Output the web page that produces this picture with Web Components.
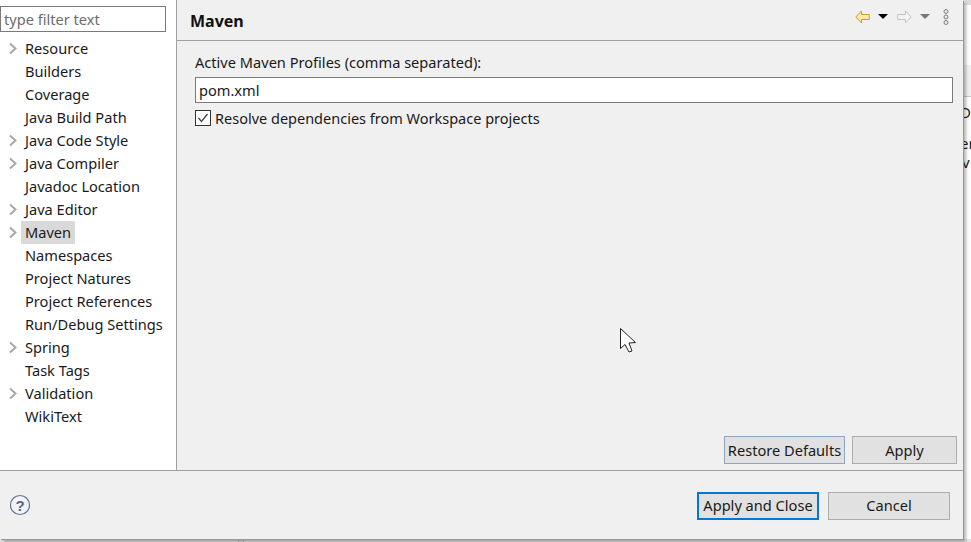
<!DOCTYPE html>
<html>
<head>
<meta charset="utf-8">
<title>Maven</title>
<style>
    html, body { margin: 0; height: 100%; overflow: hidden; }
    body { font: 14.6px "Noto Sans", sans-serif; color: #1a1a1a; background: #f0f0f0; }
</style>
</head>
<body>
<prefs-dialog>
    <filter-tree slot="side">
        <tree-item arrow>Resource</tree-item>
        <tree-item>Builders</tree-item>
        <tree-item>Coverage</tree-item>
        <tree-item>Java Build Path</tree-item>
        <tree-item arrow>Java Code Style</tree-item>
        <tree-item arrow>Java Compiler</tree-item>
        <tree-item>Javadoc Location</tree-item>
        <tree-item arrow>Java Editor</tree-item>
        <tree-item arrow selected>Maven</tree-item>
        <tree-item>Namespaces</tree-item>
        <tree-item>Project Natures</tree-item>
        <tree-item>Project References</tree-item>
        <tree-item>Run/Debug Settings</tree-item>
        <tree-item arrow>Spring</tree-item>
        <tree-item>Task Tags</tree-item>
        <tree-item arrow>Validation</tree-item>
        <tree-item>WikiText</tree-item>
    </filter-tree>
    <maven-page slot="main"></maven-page>
</prefs-dialog>
<mouse-cursor></mouse-cursor>

<script>
    class TreeItem extends HTMLElement {
    constructor() {
        super();
        this.attachShadow({ mode: 'open' });
        const arrow = this.hasAttribute('arrow') ? `<svg width="10" height="13" viewBox="0 0 10 13"><path d="M2 1.5 L7.5 6.5 L2 11.5" fill="none" stroke="#a8a8a8" stroke-width="2"/></svg>` : '';
        this.shadowRoot.innerHTML = `
        <style>
            :host { display: flex; height: 23px; align-items: center; white-space: nowrap; }
            .arrow { width: 21px; padding-left: 8px; box-sizing: border-box; display: flex; }
            .label { padding: 0 4px; height: 23px; line-height: 22px; }
            :host([selected]) .label { background: #d9d9d9; }
        </style>
        <span class="arrow">${arrow}</span><span class="label"><slot></slot></span>
        `;
    }
    }
    customElements.define('tree-item', TreeItem);

    class FilterTree extends HTMLElement {
    constructor() {
        super();
        this.attachShadow({ mode: 'open' });
        this.shadowRoot.innerHTML = `
        <style>
            :host { display: flex; flex-direction: column; height: 100%; background: #fff; }
            .filter {
                margin: 6px 0 0 0;
                width: 166px;
                height: 26px;
                box-sizing: border-box;
                border: 1px solid #7a7a7a;
                color: #6d6d6d;
                padding-left: 3px;
                line-height: 24px;
            }
            .tree { padding-top: 5px; }
        </style>
        <div class="filter">type filter text</div>
        <div class="tree"><slot></slot></div>
        `;
    }
    }
    customElements.define('filter-tree', FilterTree);

    class PushButton extends HTMLElement {
    constructor() {
        super();
        this.attachShadow({ mode: 'open' });
        this.shadowRoot.innerHTML = `
        <style>
            :host {
                display: flex;
                align-items: center;
                justify-content: center;
                box-sizing: border-box;
                height: 28px;
                background: #e1e1e1;
                border: 1px solid #adadad;
                white-space: nowrap;
            }
            :host([hover]) { border-color: #8ea5bd; }
            :host([default]) { border: 2px solid #0078d7; }
        </style>
        <slot></slot>
        `;
    }
    }
    customElements.define('push-button', PushButton);

    class MavenPage extends HTMLElement {
    constructor() {
        super();
        this.attachShadow({ mode: 'open' });
        this.shadowRoot.innerHTML = `
        <style>
            :host { display: flex; flex-direction: column; height: 100%; }
            .head {
                height: 40px;
                flex: none;
                display: flex;
                align-items: center;
                justify-content: space-between;
                border-bottom: 1px solid #a0a0a0;
                padding: 0 14px 0 13px;
            }
            h1 { font-size: 16px; font-weight: 700; margin: 1px 0 0; color: #111; }
            .tools { display: flex; align-items: center; gap: 8px; margin-top: -7px; }
            .body { flex: 1; padding: 11px 10px 0 18px; display: flex; flex-direction: column; }
            .field {
                height: 26px;
                margin-top: 5px;
                box-sizing: border-box;
                background: #fff;
                border: 1px solid #7a7a7a;
                padding-left: 3px;
                line-height: 24px;
            }
            .check { display: flex; align-items: center; gap: 4px; margin-top: 5px; height: 20px; }
            .check span:last-child { font-size: 14.5px; }
            .box { width: 16px; height: 16px; box-sizing: border-box; border: 1px solid #333; display: flex; background: #fff; }
            .actions { margin: auto -4px 0 0; display: flex; justify-content: flex-end; gap: 7px; padding-bottom: 6px; }
            .restore { width: 121px; }
            .apply { width: 105px; }
        </style>
        <div class="head">
            <h1>Maven</h1>
            <div class="tools">
                <svg width="15" height="14" viewBox="0 0 15 14"><path d="M0.8 7 L6.5 1 V4.5 H14.3 V9.5 H6.5 V13 Z" fill="#fde9a8" stroke="#d09a2c"/></svg>
                <svg width="10" height="5" viewBox="0 0 10 5"><path d="M0 0 H10 L5 5 Z" fill="#000"/></svg>
                <svg width="15" height="14" viewBox="0 0 15 14" style="margin-left:1px"><path d="M14.2 7 L8.5 1 V4.5 H0.7 V9.5 H8.5 V13 Z" fill="#f4f4f4" stroke="#c4c4c4"/></svg>
                <svg width="10" height="5" viewBox="0 0 10 5"><path d="M0 0 H10 L5 5 Z" fill="#777"/></svg>
                <svg width="6" height="16" viewBox="0 0 6 16" style="margin-left:5px"><g fill="#e8e8e8" stroke="#808080"><circle cx="3" cy="2.5" r="2"/><circle cx="3" cy="8" r="2"/><circle cx="3" cy="13.5" r="2"/></g></svg>
            </div>
        </div>
        <div class="body">
            <div>Active Maven Profiles (comma separated):</div>
            <div class="field">pom.xml</div>
            <div class="check">
                <span class="box"><svg width="14" height="14" viewBox="0 0 14 14"><path d="M2.5 7 L5.5 10.5 L11.5 3" fill="none" stroke="#444" stroke-width="1.3"/></svg></span>
                <span>Resolve dependencies from Workspace projects</span>
            </div>
            <div class="actions">
                <push-button class="restore" hover>Restore Defaults</push-button>
                <push-button class="apply">Apply</push-button>
            </div>
        </div>
        `;
    }
    }
    customElements.define('maven-page', MavenPage);

    class MouseCursor extends HTMLElement {
    constructor() {
        super();
        this.attachShadow({ mode: 'open' });
        this.shadowRoot.innerHTML = `
        <style>
            :host { display: block; position: absolute; z-index: 2; left: 620px; top: 328px; width: 17px; height: 25px; }
        </style>
        <svg width="17" height="25" viewBox="0 0 17 25"><path d="M0.5 0.5 V20.5 L5 16.5 L9 24 L12 23 L9 15 L15.5 14.5 Z" fill="#fff" stroke="#222" stroke-width="1"/></svg>
        `;
    }
    }
    customElements.define('mouse-cursor', MouseCursor);

    class PrefsDialog extends HTMLElement {
    constructor() {
        super();
        this.attachShadow({ mode: 'open' });
        this.shadowRoot.innerHTML = `
        <style>
            :host { display: grid; grid-template-columns: 963px 1fr; grid-template-rows: 539px 1fr; height: 100%; background: #eee; }
            .window {
                position: relative;
                z-index: 1;
                display: flex;
                flex-direction: column;
                min-height: 0;
                background: #f0f0f0;
                box-shadow: 1px 1px 0 #999, 3px 3px 3px rgba(0,0,0,.3);
            }
            .top { flex: 1; min-height: 0; display: flex; border-bottom: 1px solid #a0a0a0; }
            .side { width: 176px; flex: none; border-right: 1px solid #a0a0a0; background: #fff; }
            .main { flex: 1; min-width: 0; }
            .bottom { height: 68px; flex: none; display: flex; align-items: center; justify-content: space-between; padding: 0 13px 0 9px; }
            .buttons { display: flex; gap: 9px; margin-top: 1px; }
            .buttons push-button { width: 122px; padding-bottom: 1px; }

            .behind { background: #fff; overflow: hidden; display: flex; flex-direction: column; white-space: nowrap; }
            .behind .tab { height: 5px; background: #dcdcdc; flex: none; }
            .behind .gap { height: 60px; flex: none; }
            .behind .band { height: 31px; flex: none; background: #f0f0f0; border-bottom: 1px solid #c8c8c8; }
            .behind div.txt { height: 20px; line-height: 20px; font-size: 15px; }
            .below { grid-column: 1 / 3; background: #e4e4e4; display: flex; }
            .below i { width: 4px; margin-left: 238px; border: solid #c4c4c4; border-width: 0 1px; background: #dcdcdc; }
        </style>
        <div class="window">
            <div class="top">
                <div class="side"><slot name="side"></slot></div>
                <div class="main"><slot name="main"></slot></div>
            </div>
            <div class="bottom">
                <svg width="22" height="22" viewBox="0 0 22 22"><circle cx="11" cy="11" r="9.5" fill="#f4f4f6" stroke="#5f7396" stroke-width="1.2"/><text x="11" y="16.5" text-anchor="middle" font-family="Liberation Sans" font-weight="700" font-size="15" fill="#51668d">?</text></svg>
                <div class="buttons">
                    <push-button default>Apply and Close</push-button>
                    <push-button>Cancel</push-button>
                </div>
            </div>
        </div>
        <div class="behind">
            <div class="tab"></div>
            <div class="gap"></div>
            <div class="band"></div>
            <div class="txt" style="margin:5px 0 0 -3px">D</div>
            <div class="txt" style="margin:11px 0 0 -3px">er</div>
            <div class="txt" style="margin:-1px 0 0 -1px">v</div>
        </div>
        <div class="below"><i></i></div>
        `;
    }
    }
    customElements.define('prefs-dialog', PrefsDialog);
</script>
</body>
</html>
